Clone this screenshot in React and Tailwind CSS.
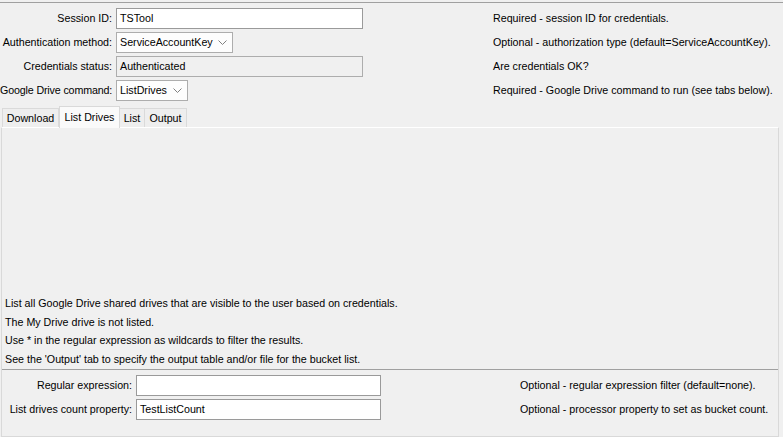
function Chevron() {
  return (
    <svg className="w-[9px] h-[5px] ml-auto mr-[5px] shrink-0" viewBox="0 0 9 5" fill="none" stroke="#808080" strokeWidth="1">
      <path d="M0.5 0.5 L4.5 4.5 L8.5 0.5" />
    </svg>
  );
}

function Combo({ value, width }) {
  return (
    <div className={`${width} h-[21px] flex items-center border border-[#adadad] bg-[#fdfdfd] pl-[3px]`}>
      <span className="whitespace-nowrap">{value}</span>
      <Chevron />
    </div>
  );
}

function TextField({ value, width, disabled }) {
  return (
    <div
      className={`${width} h-[21px] flex items-center border pl-[3px] ${
        disabled ? 'border-[#adadad] bg-[#f0f0f0]' : 'border-[#9a9a9a] bg-white'
      }`}
    >
      {value}
    </div>
  );
}

function App() {
  const tabs = [
    { name: 'Download', w: 'w-[57px]' },
    { name: 'List Drives', w: 'w-[61px]', active: true },
    { name: 'List', w: 'w-[26px]' },
    { name: 'Output', w: 'w-[43px]' },
  ];

  return (
    <div
      className="h-screen overflow-hidden bg-[#f0f0f0] text-[10.7px] text-black flex flex-col"
      style={{ fontFamily: '"Liberation Sans", Arial, sans-serif' }}
    >
      <div className="mt-[2px] border-t border-[#a0a0a0]" />

      {/* command parameters */}
      <div className="pt-[5px] grid grid-cols-[112px_373px_1fr] gap-x-1 gap-y-[3px] items-center">
        <div className="text-right">Session ID:</div>
        <TextField value="TSTool" width="w-[247px]" />
        <div>Required - session ID for credentials.</div>

        <div className="text-right whitespace-nowrap">Authentication method:</div>
        <Combo value="ServiceAccountKey" width="w-[117px]" />
        <div>Optional - authorization type (default=ServiceAccountKey).</div>

        <div className="text-right">Credentials status:</div>
        <TextField value="Authenticated" width="w-[247px]" disabled />
        <div>Are credentials OK?</div>

        <div className="text-right whitespace-nowrap tracking-[-0.15px]">Google Drive command:</div>
        <Combo value="ListDrives" width="w-[72px]" />
        <div>Required - Google Drive command to run (see tabs below).</div>
      </div>

      {/* tabs */}
      <div className="mt-[4px] pl-[2px] flex items-end h-[22px]">
        {tabs.map((t) =>
          t.active ? (
            <div
              key={t.name}
              className={`${t.w} h-[22px] -mb-px z-10 flex items-center justify-center bg-[#fafafa] border border-b-0 border-[#d9d9d9]`}
            >
              {t.name}
            </div>
          ) : (
            <div
              key={t.name}
              className={`${t.w} h-[19px] flex items-center justify-center bg-[#eeeeee] border border-b-0 border-[#dadada] -ml-px first:ml-0`}
            >
              {t.name}
            </div>
          )
        )}
      </div>

      <div className="ml-[1px] w-[778px] flex-1 border border-[#d9d9d9] border-t-white bg-[#f0f0f0] flex flex-col">
        <div className="h-[166px]" />
        <div className="pl-[3px] leading-[18.5px]">
          <div>List all Google Drive shared drives that are visible to the user based on credentials.</div>
          <div>The My Drive drive is not listed.</div>
          <div>Use * in the regular expression as wildcards to filter the results.</div>
          <div>See the 'Output' tab to specify the output table and/or file for the bucket list.</div>
        </div>
        <div className="mt-px border-t border-[#a0a0a0]" />
        <div className="mt-[5px] pl-[3px] grid grid-cols-[127px_380px_1fr] gap-x-1 gap-y-[3px] items-center">
          <div className="text-right">Regular expression:</div>
          <TextField value="" width="w-[245px]" />
          <div>Optional - regular expression filter (default=none).</div>

          <div className="text-right whitespace-nowrap">List drives count property:</div>
          <TextField value="TestListCount" width="w-[245px]" />
          <div>Optional - processor property to set as bucket count.</div>
        </div>
      </div>
    </div>
  );
}

export default App;
